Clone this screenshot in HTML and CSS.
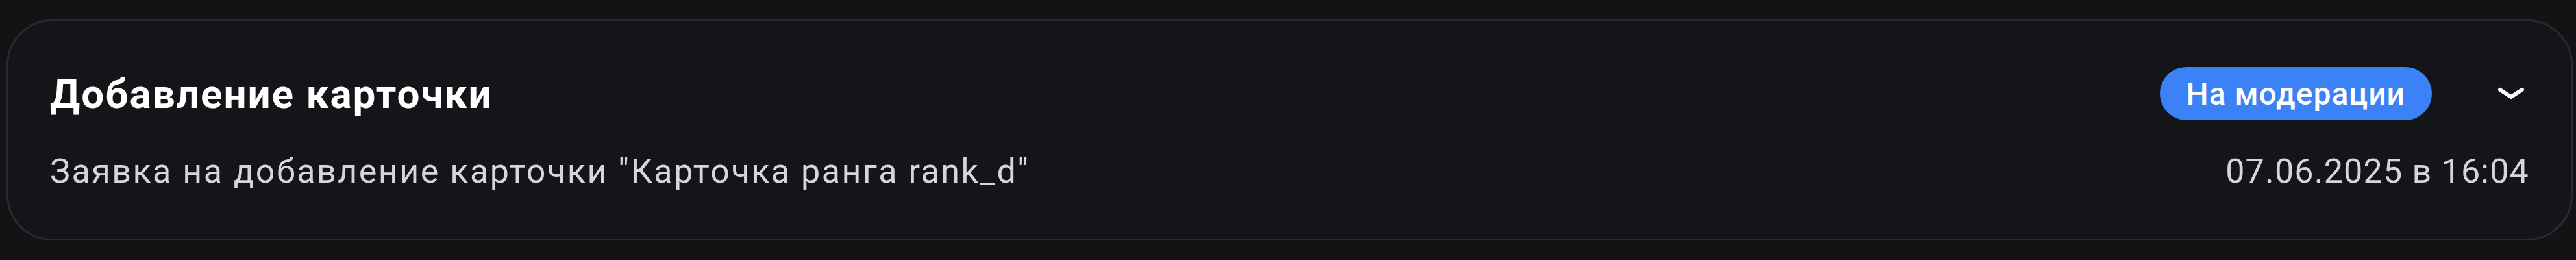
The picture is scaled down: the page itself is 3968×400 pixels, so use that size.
FILE: index.html
```html
<!DOCTYPE html>
<html lang="ru">
<head>
    <meta charset="UTF-8">
    <meta name="viewport" content="width=device-width, initial-scale=1.0">
    <title>Заявки</title>
    <link rel="stylesheet" href="styles.css">
</head>
<body>
    <div class="request-card">
        <div class="request-head">
            <h2 class="request-title">Добавление карточки</h2>
            <div class="request-actions">
                <span class="status-badge">На модерации</span>
                <button class="toggle-btn" type="button">
                    <svg viewBox="0 0 44 22" width="44" height="22">
                        <polyline points="5,5 22,16 39,5" fill="none" stroke="#fff" stroke-width="6" stroke-linecap="round" stroke-linejoin="round"/>
                    </svg>
                </button>
            </div>
        </div>
        <div class="request-body">
            <p class="request-text">Заявка на добавление карточки "Карточка ранга rank_d"</p>
            <span class="request-date">07.06.2025 в 16:04</span>
        </div>
    </div>
</body>
</html>
```

FILE: styles.css
```css
body {
    margin: 0;
    padding: 30px 5px 30px 10px;
    background-color: #131316;
    font-family: Roboto, "Noto Sans", sans-serif;
}

.request-card {
    border: 3px solid #2a2b2f;
    border-radius: 70px;
    background-color: #141518;
    padding: 70px 64px 73px;
    display: flex;
    flex-direction: column;
    gap: 48px;
}

.request-head,
.request-body {
    display: flex;
    align-items: center;
    justify-content: space-between;
}

.request-title {
    margin: 0;
    font-size: 62px;
    font-weight: 700;
    letter-spacing: 2px;
    color: #fff;
}

.request-actions {
    display: flex;
    align-items: center;
    gap: 100px;
}

.status-badge {
    display: inline-flex;
    align-items: center;
    height: 82px;
    padding: 0 41px;
    border-radius: 41px;
    background-color: #3b82f6;
    color: #fff;
    font-size: 48px;
    font-weight: 500;
    letter-spacing: 1px;
}

.toggle-btn {
    border: none;
    background: none;
    padding: 0 6px 0 0;
    display: flex;
    cursor: pointer;
}

.request-text,
.request-date {
    margin: 0;
    font-size: 52px;
    color: #d6d6da;
}

.request-text {
    letter-spacing: 2.5px;
}

.request-date {
    letter-spacing: 1.2px;
}
```
